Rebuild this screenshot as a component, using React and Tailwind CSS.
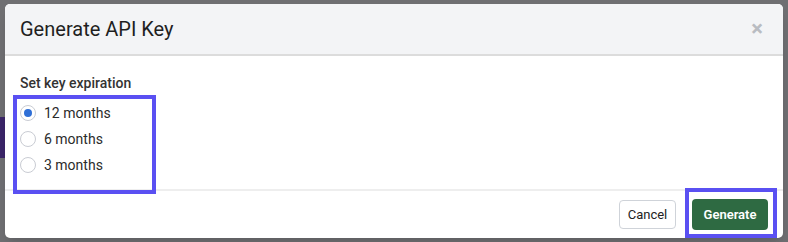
import { useState } from "react";

const options = ["12 months", "6 months", "3 months"];

function Radio({ label, checked, onChange }) {
    return (
        <label className="flex items-center h-[26px] cursor-pointer">
            <span className="flex items-center justify-center w-[16px] h-[16px] rounded-full border border-[#c9ccd3] bg-white">
                {checked && <span className="w-[8px] h-[8px] rounded-full bg-[#2f6fd6]" />}
            </span>
            <input type="radio" className="hidden" checked={checked} onChange={onChange} />
            <span className="ml-[8px] text-[14px] text-[#2b2b2b]">{label}</span>
        </label>
    );
}

export default function App() {
    const [value, setValue] = useState("12 months");

    return (
        <div className="relative w-[788px] h-[242px] bg-[#6f6f72] pt-[4px] px-[5px] overflow-hidden font-['Roboto',_'Liberation_Sans',_sans-serif]">
            <div className="absolute left-0 top-[117px] w-[5px] h-[41px] bg-[#3b2569]" />

            <div className="relative h-[234px] bg-white rounded-[5px] flex flex-col shadow-lg">
                <div className="h-[52px] bg-[#f3f4f6] border-b-2 border-[#dcdcdc] rounded-t-[5px] flex items-center justify-between pl-[15px] pr-[20px]">
                    <h2 className="text-[20px] text-[#1f1f1f]">Generate API Key</h2>
                    <button className="text-[#b9bcc2] text-[22px] leading-none font-bold">×</button>
                </div>

                <div className="flex-1 px-[15px] pt-[17px]">
                    <p className="text-[14px] font-medium text-[#333]">Set key expiration</p>
                    <div className="mt-[6px] flex flex-col">
                        {options.map((o) => (
                            <Radio key={o} label={o} checked={value === o} onChange={() => setValue(o)} />
                        ))}
                    </div>
                </div>

                <div className="border-t-2 border-[#eeeeee] h-[49px] flex items-center justify-end gap-[16px] pr-[15px]">
                    <button className="h-[29px] w-[57px] rounded-[4px] border border-[#cfd3d9] bg-white text-[13px] text-[#222]">Cancel</button>
                    <button className="h-[31px] w-[76px] rounded-[4px] bg-[#2e6a42] text-[13px] font-semibold text-white">Generate</button>
                </div>

                <div className="absolute left-[8px] top-[91px] w-[143px] h-[99px] border-4 border-[#5a50f2] pointer-events-none" />
                <div className="absolute left-[680px] top-[184px] w-[92px] h-[50px] border-4 border-[#5a50f2] pointer-events-none" />
            </div>
        </div>
    );
}
